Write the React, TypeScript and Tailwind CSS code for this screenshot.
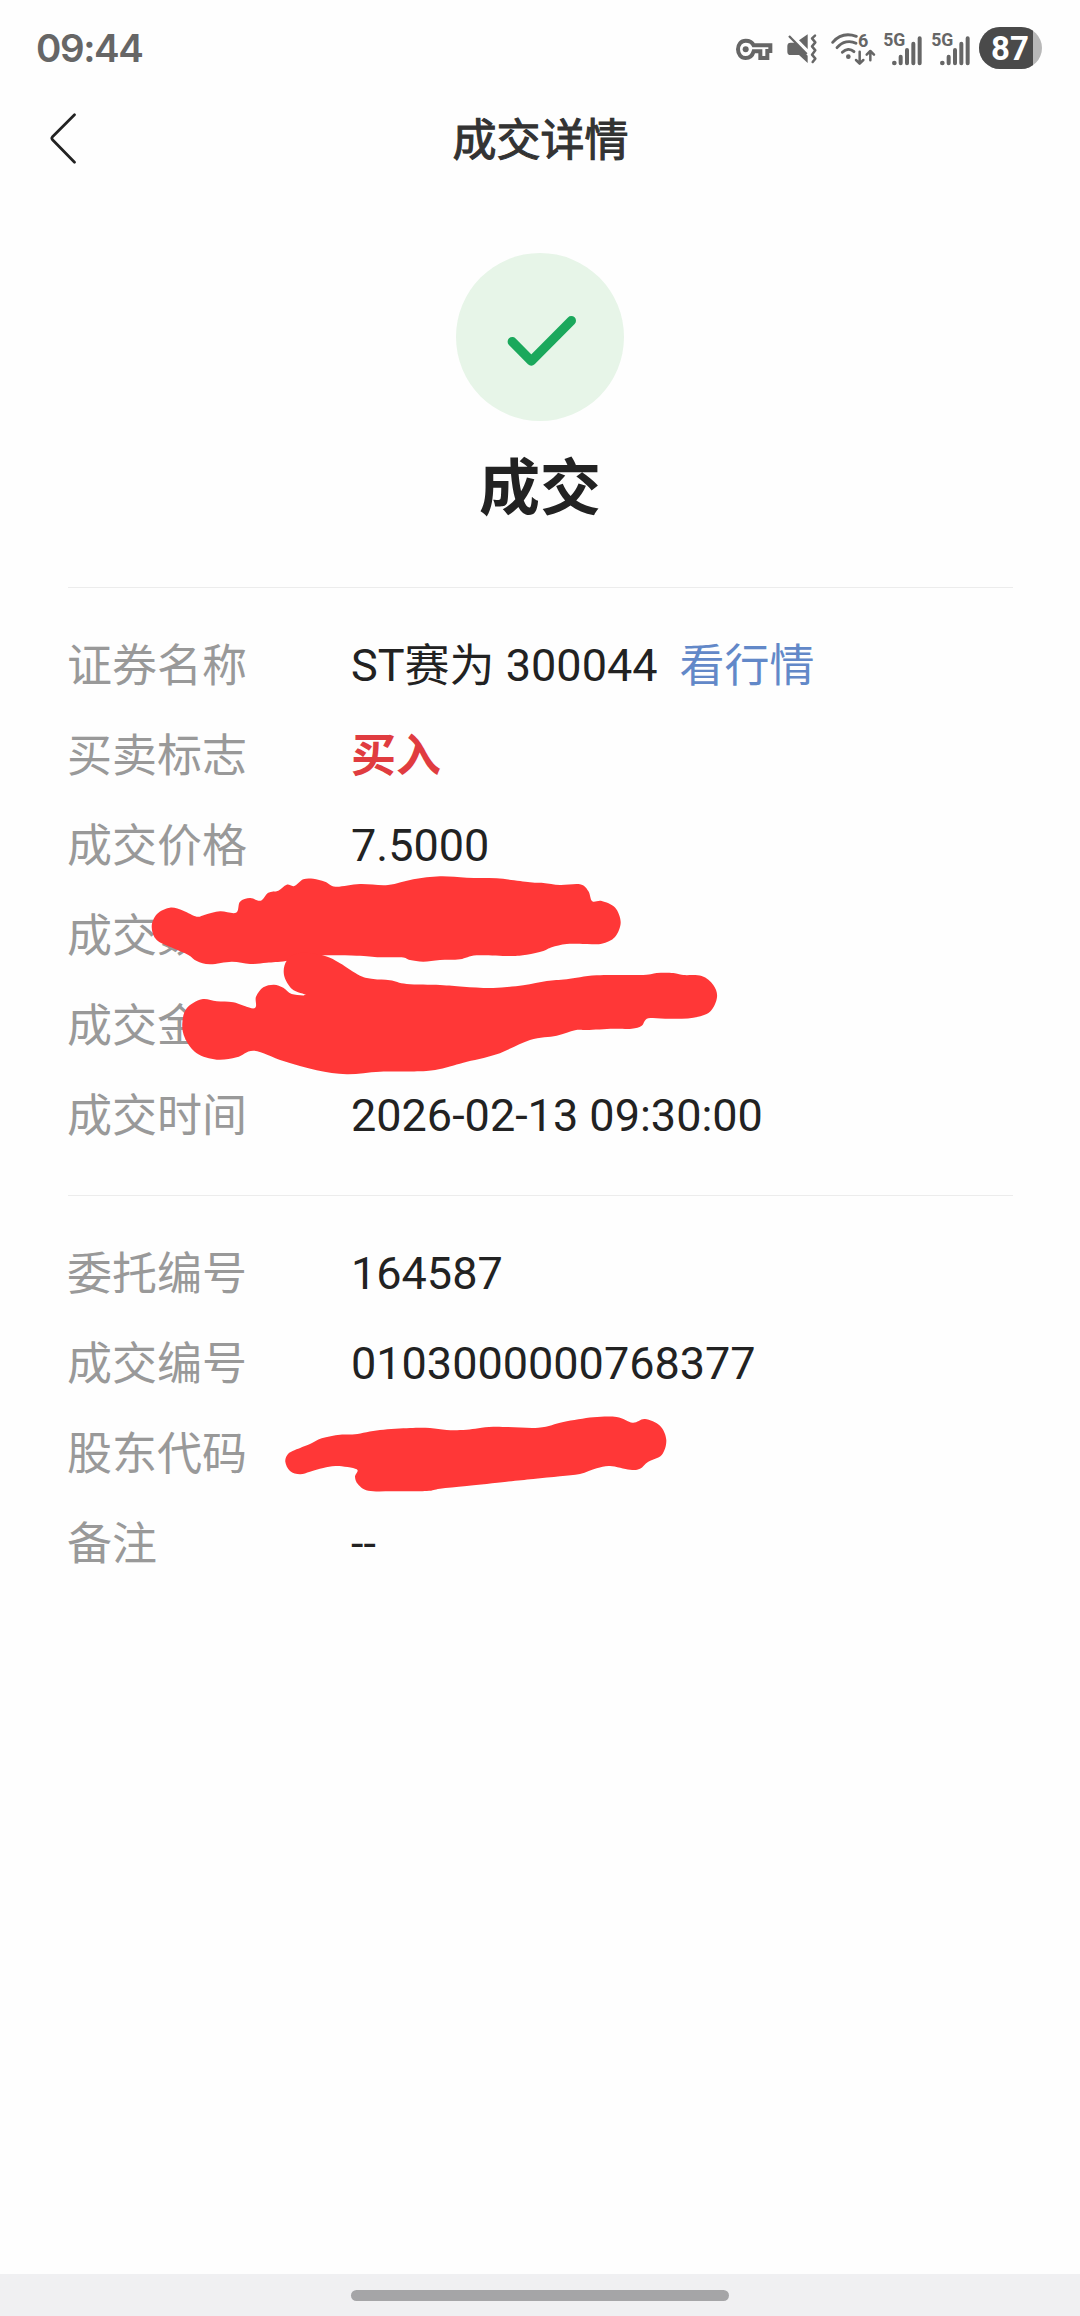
import type { ReactNode } from 'react';

type Point = [number, number];

interface DetailRow {
  label: string;
  value: ReactNode;
}

const tradeRows: DetailRow[] = [
  {
    label: '证券名称',
    value: (
      <>
        ST<span className="align-[-1px]">赛为</span> 300044
        <a className="ml-[22px] align-[-1px] text-[#6288c8]">看行情</a>
      </>
    ),
  },
  { label: '买卖标志', value: <span className="align-[-1px] font-bold text-[#e03c40]">买入</span> },
  { label: '成交价格', value: '7.5000' },
  { label: '成交数量', value: '' },
  { label: '成交金额', value: '' },
  { label: '成交时间', value: '2026-02-13 09:30:00' },
];

const orderRows: DetailRow[] = [
  { label: '委托编号', value: '164587' },
  { label: '成交编号', value: '0103000000768377' },
  { label: '股东代码', value: '' },
  { label: '备注', value: '--' },
];

// Outlines of the marker strokes that hide private values
const marks: Point[][] = [
  [
    [151.7, 926.7], [157, 914], [170, 907.7], [183.3, 910.7], [196.7, 916.7], [205, 914.7], [220, 911.3], [236, 912.7],
    [240, 901.7], [250, 898], [260.7, 900.7], [268.3, 892.7], [278.3, 890.7], [286.7, 884.7], [294.3, 886],
    [303.3, 879.3], [313.3, 878.7], [325, 881.7], [335.7, 886.7], [360, 884], [388, 885], [413.3, 879.3],
    [440, 876.3], [466.7, 877.7], [496.7, 878.3], [530, 882.3], [543.3, 883], [560, 885], [580, 884.3],
    [588.3, 891], [592.3, 901.3], [601.7, 901], [615, 907.5], [620.7, 922.3], [615, 937], [601.7, 943.7],
    [586.7, 944], [566.7, 944], [551.7, 947.3], [543.3, 951], [526.7, 954.7], [510, 956], [476.7, 955.3],
    [460, 959.3], [440, 960], [423.3, 961.7], [410, 960], [401.7, 957.3], [380, 957.3], [356.7, 955.7],
    [316.7, 955.7], [286, 961], [266.7, 962.7], [250, 964], [231.7, 961.7], [210, 964.3], [196.7, 961],
    [188.3, 955], [173.3, 948.3], [156.7, 940],
  ],
  [
    [182.3, 1023.3], [186.7, 1008.3], [201.7, 999.3], [216.7, 1001.3], [233.3, 1002.3], [254.3, 1008.3],
    [256, 996.7], [263.3, 987.3], [274, 984.7], [283.3, 987.7], [291.7, 994], [306, 995], [292, 989],
    [284, 975], [286.7, 960.7], [300, 953], [325, 956], [340, 963.3], [360, 975.7], [373.3, 979], [390, 980.3],
    [406.7, 984], [440, 985], [463.3, 986.7], [493.3, 988], [523.3, 985.3], [546.7, 981], [566.7, 979.3],
    [596.7, 975.3], [643.3, 975], [656.7, 973], [673.3, 973], [683.3, 975], [701.7, 976], [713.3, 985],
    [717, 997.3], [710, 1011.7], [693.3, 1017.7], [670, 1018.7], [648.3, 1018.3], [641.7, 1025.7],
    [631.7, 1028.7], [613.3, 1028.7], [586.7, 1030], [575, 1030.3], [556.7, 1035.7], [530, 1040],
    [496.7, 1054.3], [463.3, 1062.7], [440, 1069], [420, 1071.3], [380, 1071.7], [346.7, 1074.3],
    [316.7, 1070.3], [283.3, 1061], [254.3, 1050.7], [236.7, 1057.3], [216.7, 1059.7], [196.7, 1053.3],
    [185, 1038.3],
  ],
  [
    [285.3, 1461.7], [288, 1454], [295, 1450], [310, 1444], [321.7, 1438.3], [340, 1434.7], [355, 1434.3], [380, 1430],
    [410, 1428], [430, 1428], [446.7, 1430], [466.7, 1429.7], [493.3, 1426.7], [538.3, 1427.7], [563.3, 1422],
    [593.3, 1417.3], [616.7, 1417], [632.7, 1422.7], [645, 1419], [660, 1425.7], [666.3, 1440], [661.7, 1455],
    [648.3, 1461.7], [640, 1468.7], [630, 1469.7], [610, 1466], [596.7, 1468.3], [580, 1474], [560, 1476.3],
    [533.3, 1479], [506.7, 1481.7], [466.7, 1486], [440, 1488.7], [426.7, 1491], [393.3, 1491.3],
    [368.3, 1490.7], [358, 1484.3], [355, 1476.7], [356.7, 1469.3], [336.7, 1466], [323.3, 1468],
    [310, 1471.7], [300, 1474.3], [290, 1471],
  ],
];

// Closed Catmull-Rom curve through all points
function smoothPath(points: Point[]) {
  const n = points.length;
  let d = `M${points[0][0]} ${points[0][1]}`;
  for (let i = 0; i < n; i++) {
    const p0 = points[(i - 1 + n) % n];
    const p1 = points[i];
    const p2 = points[(i + 1) % n];
    const p3 = points[(i + 2) % n];
    d += `C${p1[0] + (p2[0] - p0[0]) / 6} ${p1[1] + (p2[1] - p0[1]) / 6} ${p2[0] - (p3[0] - p1[0]) / 6} ${p2[1] - (p3[1] - p1[1]) / 6} ${p2[0]} ${p2[1]}`;
  }
  return d + 'Z';
}

function KeyIcon() {
  return (
    <svg className="h-[44px] w-[38px]" viewBox="45 48 114 132" fill="none" stroke="#666" strokeWidth="12">
      <path d="M101 106H151V123H142V144H121V124H101C97 137 88 144 77 144C63 144 54 132 54 118S63 92 77 92C88 92 97 97 101 106Z" />
      <circle cx="77" cy="118" r="9" fill="#666" stroke="none" />
    </svg>
  );
}

function MuteIcon() {
  return (
    <svg className="ml-3.5 h-[44px] w-[30px]" viewBox="201 48 90 132" fill="none">
      <path d="M212 98H226L263 137V159L237 135H212Q202 135 202 125V108Q202 98 212 98Z" fill="#666" />
      <path d="M237 91L263 73V117Z" fill="#666" />
      <path d="M207 78L260 132" stroke="#666" strokeWidth="7" />
      <path
        d="M285 77L276 85L286 97L276 109L286 121L276 134L286 146L278 156"
        stroke="#666"
        strokeWidth="7.5"
        strokeLinecap="round"
        strokeLinejoin="round"
      />
    </svg>
  );
}

function WifiIcon() {
  return (
    <svg className="ml-3.5 h-[44px] w-[45px]" viewBox="333 48 135 132" fill="none">
      <g stroke="#666" strokeWidth="8.5" strokeLinecap="round" strokeLinejoin="round">
        <path d="M338 97C357 75 383 70 409 79" />
        <path d="M351 113C367 94 390 90 408 100" />
        <path d="M367 127C377 117 391 115 402 125" />
      </g>
      <circle cx="385" cy="140" r="7" fill="#666" />
      <text x="414" y="110" fontSize="54" fontWeight="700" fill="#666" className="font-['Roboto',sans-serif]">
        6
      </text>
      <g stroke="#666" strokeWidth="7.5" strokeLinecap="round" strokeLinejoin="round">
        <path d="M419 125V160M408 150L419 161L430 150" />
        <path d="M451 151V124M440 134L451 123L462 134" />
      </g>
    </svg>
  );
}

function SignalIcon() {
  return (
    <svg className="h-[44px] w-[39px]" viewBox="489 48 117 132" fill="none">
      <text
        x="490"
        y="107"
        fontSize="53"
        fontWeight="700"
        fill="#666"
        textLength="66"
        className="font-['Roboto',sans-serif]"
      >
        5G
      </text>
      <path d="M542 140V160M561 120V160M580 101V160M599 85V160" stroke="#666" strokeWidth="12" strokeLinecap="round" />
      <circle cx="523" cy="159" r="7" fill="#666" />
    </svg>
  );
}

function StatusBar() {
  return (
    <div className="flex h-24 items-center justify-between pl-9 pr-[38px]">
      <span className="font-['Inter',sans-serif] text-[38.5px] font-semibold leading-none tracking-[-1.4px] text-[#666]">
        09:44
      </span>
      <div className="flex items-center">
        <KeyIcon />
        <MuteIcon />
        <WifiIcon />
        <div className="ml-[7px] flex gap-[9px]">
          <SignalIcon />
          <SignalIcon />
        </div>
        <div className="ml-[9px] flex h-[42px] w-[63px] overflow-hidden rounded-full bg-[#b8b8b8]">
          <div className="flex w-[54px] items-center justify-center bg-[#4a4a4a] pl-2 font-['Roboto',sans-serif] text-[33px] font-bold leading-none text-white">
            87
          </div>
        </div>
      </div>
    </div>
  );
}

function DetailList({ rows }: { rows: DetailRow[] }) {
  return (
    <dl className="border-t border-[#ececec] pt-8">
      {rows.map((row) => (
        <div key={row.label} className="flex h-[90px] items-center text-[45px] leading-none">
          <dt className="-ml-px w-[284px] shrink-0 pt-0.5 text-[#999]">{row.label}</dt>
          <dd className="h-[45px] whitespace-nowrap text-[#222]">{row.value}</dd>
        </div>
      ))}
    </dl>
  );
}

export default function App() {
  return (
    <div className="relative flex h-[2316px] w-[1080px] flex-col bg-[#fefefe] font-['Roboto','Noto_Sans_CJK_SC',sans-serif]">
      <StatusBar />

      <header className="grid h-[88px] grid-cols-[1fr_auto_1fr] items-center">
        <svg className="mb-1 ml-12 h-[52px] w-[30px]" viewBox="0 0 30 52" fill="none">
          <path
            d="M26.5 2.7L4.3 25Q3.3 26.2 4.3 27.5L26.5 50.2"
            stroke="#222"
            strokeWidth="2.7"
            strokeLinecap="round"
          />
        </svg>
        <h1 className="pl-px pt-0.5 text-[44px] leading-none text-[#333] [-webkit-text-stroke:1.1px_#333]">成交详情</h1>
      </header>

      <main className="flex-1 pl-[68px] pr-[67px]">
        <section className="flex flex-col items-center pr-px pt-[69px]">
          <div className="size-[168px] rounded-full bg-[#e7f5e8]">
            <svg viewBox="0 0 168 168" fill="none">
              <path
                d="M56.3 88.7L75.3 108L115.3 67.7"
                stroke="#1ba85c"
                strokeWidth="9.4"
                strokeLinecap="round"
                strokeLinejoin="round"
              />
            </svg>
          </div>
          <h2 className="mb-[53px] mt-[23px] text-[61px] font-bold leading-[90px] text-[#222]">成交</h2>
        </section>

        <DetailList rows={tradeRows} />
        <div className="mt-[35px]">
          <DetailList rows={orderRows} />
        </div>
      </main>

      <footer className="flex h-[42px] justify-center bg-[#f0f0f2] pt-4">
        <div className="h-[11px] w-[378px] rounded-full bg-[#a5a5a7]" />
      </footer>

      <svg className="pointer-events-none absolute left-0 top-0 h-[2316px] w-[1080px]" viewBox="0 0 1080 2316">
        {marks.map((points, i) => (
          <path key={i} d={smoothPath(points)} fill="#ff3737" />
        ))}
      </svg>
    </div>
  );
}
